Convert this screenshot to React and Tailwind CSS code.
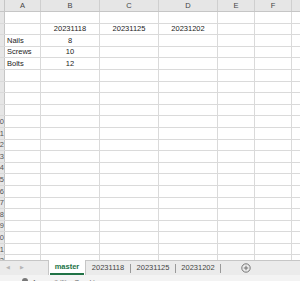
import React from "react";

const cols = [
  { key: "A", w: "w-[36px]" },
  { key: "B", w: "w-[59px]" },
  { key: "C", w: "w-[59px]" },
  { key: "D", w: "w-[59px]" },
  { key: "E", w: "w-[37px]" },
  { key: "F", w: "w-[37px]" },
  { key: "G", w: "w-[40px]" },
];

const data = {
  2: { B: "20231118", C: "20231125", D: "20231202" },
  3: { A: "Nails", B: "8" },
  4: { A: "Screws", B: "10" },
  5: { A: "Bolts", B: "12" },
};

const rows = Array.from({ length: 22 }, (_, i) => i + 1);
const sheets = ["20231118", "20231125", "20231202"];

const App = () => {
  return (
    <div
      className="w-[300px] h-[281px] overflow-hidden flex flex-col bg-white text-[7.5px] text-[#222]"
      style={{ fontFamily: '"Liberation Sans", Arial, sans-serif' }}
    >
      {/* grid */}
      <div className="h-[260px] overflow-hidden flex flex-col shrink-0">
        <div className="flex h-[12px] shrink-0 bg-[#e6e6e6] border-b border-[#c6c6c6]">
          <div className="w-[5px] shrink-0 border-r border-[#c6c6c6]" />
          {cols.map((c) => (
            <div
              key={c.key}
              className={`${c.w} shrink-0 border-r border-[#cfcfcf] flex items-center justify-center text-[#444]`}
            >
              {c.key === "G" ? null : c.key}
            </div>
          ))}
        </div>
        {rows.map((r) => (
          <div key={r} className="flex h-[11.6px] shrink-0 border-b border-[#dadada]">
            <div className="w-[5px] shrink-0 bg-[#e6e6e6] border-r border-[#c6c6c6] overflow-hidden flex justify-end items-center text-[#555]">
              {r >= 10 ? <span className="whitespace-nowrap">{r}</span> : null}
            </div>
            {cols.map((c) => {
              const v = data[r] && data[r][c.key];
              const left = c.key === "A";
              return (
                <div
                  key={c.key}
                  className={`${c.w} shrink-0 border-r border-[#dadada] flex items-center whitespace-nowrap ${
                    left ? "justify-start pl-[2px]" : "justify-center"
                  }`}
                >
                  {v}
                </div>
              );
            })}
          </div>
        ))}
      </div>

      {/* sheet tabs */}
      <div className="h-[15px] shrink-0 flex items-stretch bg-[#ebebeb] border-t border-[#c6c6c6]">
        <div className="w-[48px] shrink-0 flex items-center gap-[10px] pl-[6px] text-[5px] text-[#b5b5b5]">
          <span>◀</span>
          <span>▶</span>
        </div>
        <div className="w-[38px] shrink-0 bg-white border-x border-[#c6c6c6] -mt-px flex flex-col">
          <div className="flex-1 flex items-center justify-center font-bold text-[#217346]">master</div>
          <div className="h-[2px] mx-[1px] bg-[#217346]" />
        </div>
        {sheets.map((s) => (
          <div key={s} className="w-[45px] shrink-0 flex items-center">
            <div className="flex-1 text-center text-[#444]">{s}</div>
            <div className="w-px h-[9px] bg-[#9a9a9a]" />
          </div>
        ))}
        <div className="w-[50px] shrink-0 flex items-center justify-center">
          <svg width="10" height="10" viewBox="0 0 10 10">
            <circle cx="5" cy="5" r="4.2" fill="none" stroke="#6a6a6a" strokeWidth="0.9" />
            <path d="M5 2.8v4.4M2.8 5h4.4" stroke="#6a6a6a" strokeWidth="0.9" />
          </svg>
        </div>
      </div>

      {/* status bar */}
      <div className="flex-1 bg-[#f3f3f3] overflow-hidden flex items-start gap-[4px] pl-[22px] pt-[3px] text-[7px] text-[#666]">
        <span className="w-[6px] h-[6px] rounded-full bg-[#777]" />
        <span className="whitespace-nowrap">Accessibility: Good to go</span>
      </div>
    </div>
  );
};

export default App;
